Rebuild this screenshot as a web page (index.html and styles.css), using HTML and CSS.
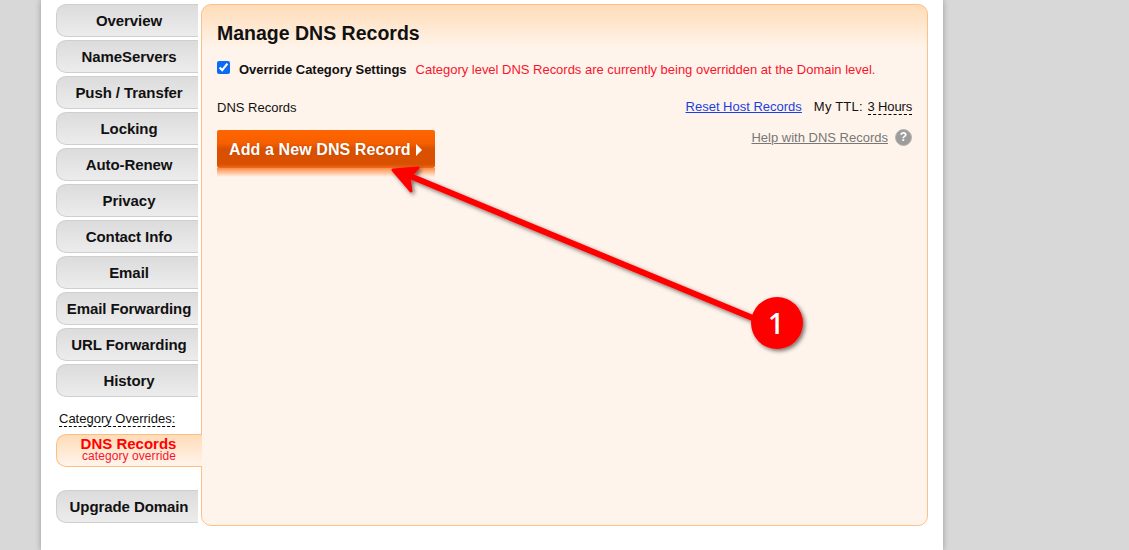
FILE: index.html
```html
<!DOCTYPE html>
<html lang="en">
<head>
<meta charset="utf-8">
<title>Manage DNS Records</title>
<link rel="stylesheet" href="styles.css">
</head>
<body>
<div class="page">
  <nav class="side">
    <a class="tab">Overview</a>
    <a class="tab">NameServers</a>
    <a class="tab">Push / Transfer</a>
    <a class="tab">Locking</a>
    <a class="tab">Auto-Renew</a>
    <a class="tab">Privacy</a>
    <a class="tab">Contact Info</a>
    <a class="tab">Email</a>
    <a class="tab">Email Forwarding</a>
    <a class="tab">URL Forwarding</a>
    <a class="tab">History</a>
    <div class="cat"><span class="cat-label">Category Overrides:</span></div>
    <a class="tab-active"><span class="ta-main">DNS Records</span><span class="ta-sub">category override</span></a>
    <a class="tab upgrade">Upgrade Domain</a>
  </nav>
  <main class="panel">
    <h1 class="title">Manage DNS Records</h1>
    <div class="override">
      <input class="check" type="checkbox" checked>
      <b class="override-label">Override Category Settings</b>
      <span class="override-msg">Category level DNS Records are currently being overridden at the Domain level.</span>
    </div>
    <div class="records-row">
      <span>DNS Records</span>
      <span class="records-right"><a class="link">Reset Host Records</a><span class="ttl">My TTL: <span class="ttl-val">3 Hours</span></span></span>
    </div>
    <div class="action-row">
      <div class="btn-wrap">
        <a class="btn">Add a New DNS Record<i class="caret"></i></a>
        <div class="btn-reflect"></div>
      </div>
      <div class="help"><a class="help-link">Help with DNS Records</a><span class="help-icon">?</span></div>
    </div>
  </main>
  <svg class="arrow" width="1129" height="550" viewBox="0 0 1129 550" aria-hidden="true">
    <defs>
      <filter id="sh" x="-20%" y="-20%" width="140%" height="140%">
        <feDropShadow dx="2" dy="2" stdDeviation="2" flood-color="#000" flood-opacity=".55"/>
      </filter>
    </defs>
    <g filter="url(#sh)">
      <line x1="772" y1="326" x2="410" y2="176" stroke="#f00" stroke-width="6"/>
      <path d="M393 170 L418 168 L409 177 L411 191 Z" fill="#f00" stroke="#f00" stroke-width="3" stroke-linejoin="round"/>
      <circle cx="777" cy="323" r="26" fill="#f00"/>
    </g>
  </svg>
  <span class="badge-num">1</span>
</div>
</body>
</html>
```
FILE: styles.css
```css
* { box-sizing: border-box; }
html, body { margin: 0; height: 550px; overflow: hidden; }
body {
  background: #d8d8d8;
  font-family: "Liberation Sans", Arial, sans-serif;
  color: #111;
}
.page {
  width: 902px;
  height: 550px;
  margin-left: 41px;
  background: #fff;
  box-shadow: 0 0 6px rgba(0,0,0,.3);
  display: flex;
  align-items: flex-start;
  padding: 4px 0 0 15px;
}
.side {
  width: 145px;
  flex: none;
  display: flex;
  flex-direction: column;
}
.tab {
  display: block;
  width: 142px;
  height: 33px;
  margin-bottom: 3px;
  padding-left: 3px;
  border: 1px solid #cfcfcf;
  border-right: 0;
  border-radius: 10px 0 0 10px;
  background: linear-gradient(#dcdcdc, #ececec);
  font-weight: bold;
  font-size: 15px;
  letter-spacing: -.08px;
  line-height: 31px;
  text-align: center;
  color: #111;
}
.cat {
  height: 34px;
  padding: 12px 0 0 3px;
  font-size: 13px;
  line-height: 14px;
}
.cat-label { border-bottom: 1px dashed #000; display: inline-block; height: 15px; }
.tab-active {
  position: relative;
  z-index: 2;
  display: flex;
  flex-direction: column;
  align-items: center;
  width: 146px;
  height: 33px;
  padding: 2px 0 0;
  border: 1px solid #fdbf80;
  border-right: 0;
  border-radius: 10px 0 0 10px;
  background: linear-gradient(#ffdcb8, #fff4eb);
  color: #f00;
  text-align: center;
}
.ta-main { font-weight: bold; font-size: 15px; line-height: 14px; padding-right: 2px; }
.ta-sub { font-size: 12px; line-height: 11px; padding-right: 1px; letter-spacing: .07px; color: #f6162e; }
.upgrade { margin-top: 23px; }
.panel {
  width: 727px;
  height: 522px;
  margin-left: 0;
  flex: none;
  padding: 0 15px;
  border: 1px solid #fdc089;
  border-radius: 10px;
  background: linear-gradient(#ffdcb8 0, #fff4eb 44px);
  font-size: 13px;
}
.title {
  margin: 15px 0 0;
  font-size: 19.5px;
  line-height: 26px;
  font-weight: bold;
  color: #111;
}
.override {
  display: flex;
  align-items: center;
  height: 20px;
  margin-top: 13px;
}
.check { width: 13px; height: 13px; margin: 0 9px 3px 0; accent-color: #0a6cf5; }
.override-label { font-size: 13px; margin-right: 9px; letter-spacing: -.03px; }
.override-msg { color: #f6162e; font-size: 13px; letter-spacing: -.015px; }
.records-row {
  display: flex;
  justify-content: space-between;
  align-items: flex-end;
  margin-top: 16px;
  height: 20px;
}
.records-right { display: flex; align-items: baseline; }
.link { color: #1a3fe0; text-decoration: underline; }
.ttl { margin-left: 12px; letter-spacing: .2px; }
.ttl-val {
  display: inline-block;
  margin-left: 1px;
  line-height: 14px;
  letter-spacing: -.15px;
  border-bottom: 1px dashed #000;
}
.action-row {
  display: flex;
  justify-content: space-between;
  align-items: flex-start;
  margin-top: 15px;
}
.btn-wrap { width: 218px; }
.btn {
  display: block;
  height: 38px;
  padding-left: 12px;
  border-radius: 2px;
  background: linear-gradient(#ff6600 0, #f65f00 35%, #d85000 50%, #d95000 90%, #f26a1a 100%);
  color: #fff;
  font-weight: bold;
  font-size: 16px;
  letter-spacing: .1px;
  line-height: 40px;
  text-shadow: 0 0 1px rgba(120,40,0,.5);
}
.caret {
  display: inline-block;
  margin-left: 5px;
  border-left: 6px solid #fff;
  border-top: 6px solid transparent;
  border-bottom: 6px solid transparent;
  vertical-align: -1px;
}
.btn-reflect {
  height: 9px;
  background: linear-gradient(#ff8c45, #fff4eb);
}
.help {
  display: flex;
  align-items: center;
  margin-top: -1px;
  color: #777;
}
.help-link { color: #777; text-decoration: underline; }
.help-icon {
  width: 17px;
  height: 17px;
  margin-left: 7px;
  border-radius: 50%;
  background: #9c9c9c;
  border: 1px solid #b5b5b5;
  color: #fff;
  font-weight: bold;
  font-size: 12px;
  line-height: 15px;
  text-align: center;
}
.arrow { position: absolute; left: 0; top: 0; z-index: 3; pointer-events: none; }
.badge-num {
  position: absolute;
  z-index: 4;
  left: 766px;
  top: 301px;
  width: 20px;
  text-align: center;
  font-family: "Open Sans", sans-serif;
  font-size: 28px;
  line-height: 44px;
  font-weight: 600;
  color: #fff;
}
```
